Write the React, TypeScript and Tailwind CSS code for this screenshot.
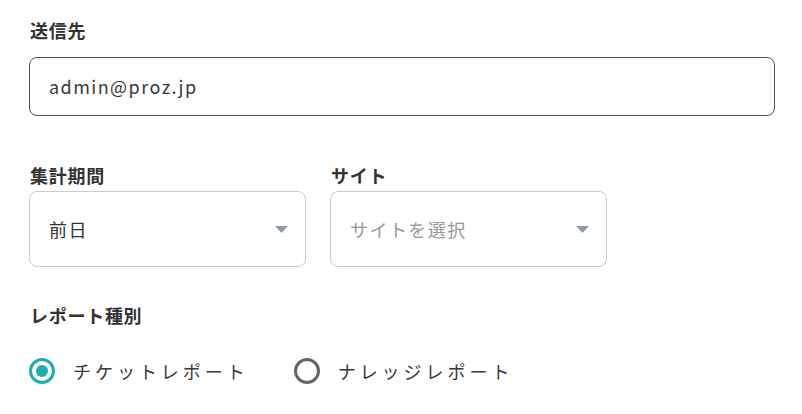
import React from 'react';

const Caret = () => (
  <svg width="13" height="7" viewBox="0 0 13 7" className="shrink-0">
    <path d="M0 0h13L6.5 7z" fill="#8d9aa9" />
  </svg>
);

const Radio = ({ checked, label }: { checked?: boolean; label: string }) => (
  <label className="flex items-center">
    <span
      className={`w-[26px] h-[26px] rounded-full flex items-center justify-center ${
        checked ? 'border-[3px] border-[#22adad]' : 'border-[3px] border-[#666666]'
      }`}
    >
      {checked && <span className="w-[12px] h-[12px] rounded-full bg-[#22adad]" />}
    </span>
    <span className="ml-[18px] text-[18px] leading-[26px] tracking-[0.22em] text-[#3a3a3a]">{label}</span>
  </label>
);

export default function App() {
  const fields = [
    { label: '集計期間', value: '前日', placeholder: false },
    { label: 'サイト', value: 'サイトを選択', placeholder: true },
  ];

  return (
    <div className="w-[802px] h-[414px] bg-white px-[29px] pt-[18px] font-['Noto_Sans_CJK_JP','Noto_Sans',sans-serif] text-[#333333]">
      <div className="text-[18px] leading-[24px] font-bold tracking-[0.04em] pl-[1px]">送信先</div>
      <div className="mt-[15px] w-[746px] h-[59px] border border-[#555555] rounded-[8px] flex items-center px-[19px] text-[18px] tracking-[0.08em] text-[#3a3a3a]">
        admin@proz.jp
      </div>

      <div className="mt-[47px] flex gap-[24px]">
        {fields.map((f) => (
          <div key={f.label} className="w-[277px]">
            <div className="text-[18px] leading-[24px] font-bold tracking-[0.04em] pl-[1px]">{f.label}</div>
            <div className="mt-[4px] h-[76px] border border-[#cccccc] rounded-[8px] flex items-center justify-between pl-[19px] pr-[17px]">
              <span className={`text-[18px] tracking-[0.08em] ${f.placeholder ? 'text-[#999999]' : 'text-[#333333]'}`}>
                {f.value}
              </span>
              <Caret />
            </div>
          </div>
        ))}
      </div>

      <div className="mt-[36px] text-[18px] leading-[24px] font-bold tracking-[0.04em] pl-[1px]">レポート種別</div>
      <div className="mt-[31px] flex items-center gap-[45px]">
        <Radio checked label="チケットレポート" />
        <Radio label="ナレッジレポート" />
      </div>
    </div>
  );
}
